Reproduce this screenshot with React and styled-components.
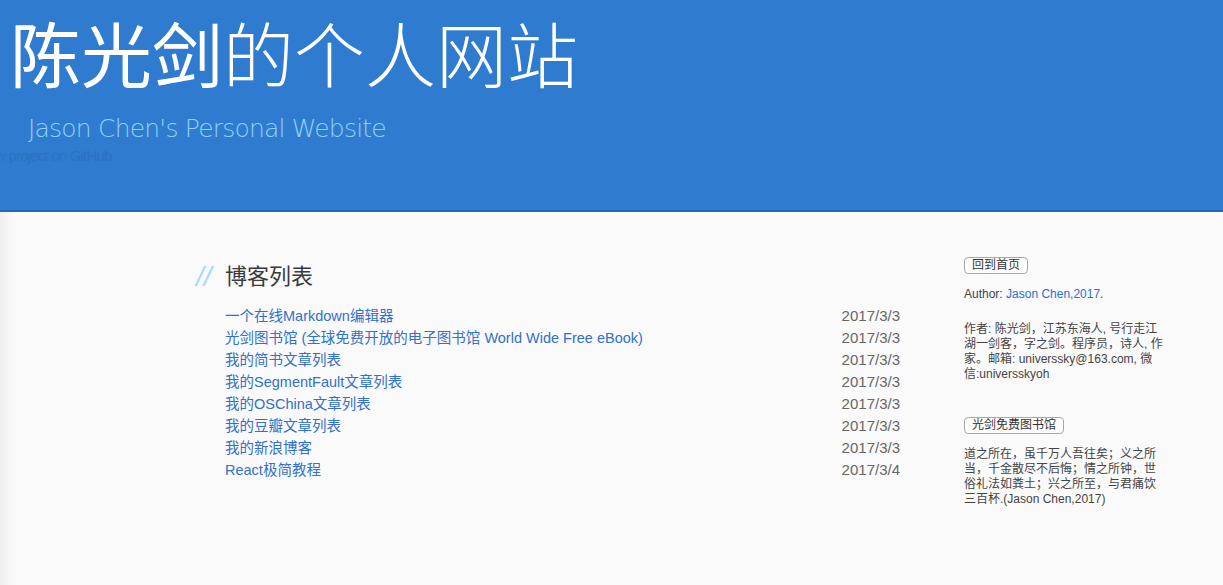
import React from "react";
import { createGlobalStyle, styled } from "styled-components";

const GlobalStyle = createGlobalStyle`
  html, body {
    margin: 0;
    padding: 0;
  }
  body {
    background: linear-gradient(to right, #efefef 0px, #f7f7f7 10px, #fafafa 16px, #fafafa 100%);
    font-family: "Liberation Sans", "Noto Sans CJK SC", sans-serif;
    color: #333;
    min-height: 585px;
  }
`;

const cjk = `"Liberation Sans", "Noto Sans CJK SC", sans-serif`;

const Header = styled.header`
  background: #2f7bcf;
  border-bottom: 2px solid #2867b4;
  height: 212px;
  box-sizing: border-box;
  overflow: hidden;
  padding-top: 8px;
`;

const SiteTitle = styled.h1`
  margin: 0 0 0 10px;
  font-family: "Noto Sans CJK SC", sans-serif;
  font-size: 71px;
  line-height: 86px;
  color: #fff;
  font-weight: 200;
`;

const Heavy = styled.span`
  font-weight: 400;
`;

const Tagline = styled.h2`
  margin: 17px 0 0 28px;
  font-family: "DejaVu Sans", sans-serif;
  font-weight: 300;
  font-size: 25px;
  letter-spacing: -0.8px;
  color: #8fd1f7;
  line-height: 36px;
`;

/* barely visible link, half off the left edge as in the original */
const GhostLink = styled.a`
  display: block;
  margin: 0 0 0 -24px;
  font-family: "Liberation Sans", sans-serif;
  font-size: 15px;
  line-height: 18px;
  color: #2c72c3;
  text-decoration: none;
  letter-spacing: -0.8px;
`;

const Page = styled.div`
  display: flex;
  align-items: flex-start;
  padding: 45px 0 40px 196px;
`;

const Main = styled.section`
  width: 704px;
  padding-top: 4px;
`;

const Heading = styled.h3`
  margin: 0;
  display: flex;
  align-items: center;
  font-family: ${cjk};
  font-weight: 400;
  font-size: 22px;
  line-height: 32px;
  color: #3a3a3a;
`;

const Slashes = styled.span`
  width: 29px;
  font-family: "Liberation Sans", sans-serif;
  font-size: 28px;
  color: #a3d9f9;
  font-style: italic;
`;

const PostList = styled.ul`
  list-style: none;
  margin: 12px 0 0;
  padding: 0 0 0 29px;
`;

const PostRow = styled.li`
  display: flex;
  justify-content: space-between;
  font-family: ${cjk};
  font-size: 14.5px;
  line-height: 22px;
`;

const PostLink = styled.a`
  color: #3270cb;
  text-decoration: none;
`;

const PostDate = styled.span`
  color: #666;
  font-size: 15px;
`;

const Sidebar = styled.aside`
  width: 200px;
  margin-left: 64px;
  font-family: ${cjk};
  font-size: 12px;
  line-height: 15px;
  color: #444;
`;

const PillButton = styled.button`
  display: block;
  font-family: ${cjk};
  font-size: 12px;
  line-height: 13px;
  color: #333;
  background: #fff;
  border: 1px solid #a9a9a9;
  border-radius: 4px;
  padding: 1px 7px;
  margin: 0;
`;

const Note = styled.p`
  margin: ${(p) => p.$mt || 0}px 0 0;
`;

const Blue = styled.a`
  color: #2f6fcb;
  text-decoration: none;
`;

const posts = [
  ["一个在线Markdown编辑器", "2017/3/3"],
  ["光剑图书馆 (全球免费开放的电子图书馆 World Wide Free eBook)", "2017/3/3"],
  ["我的简书文章列表", "2017/3/3"],
  ["我的SegmentFault文章列表", "2017/3/3"],
  ["我的OSChina文章列表", "2017/3/3"],
  ["我的豆瓣文章列表", "2017/3/3"],
  ["我的新浪博客", "2017/3/3"],
  ["React极简教程", "2017/3/4"],
];

export default function App() {
  return (
    <>
      <GlobalStyle />
      <Header>
        <SiteTitle>
          <Heavy>陈光剑</Heavy>的个人网站
        </SiteTitle>
        <Tagline>Jason Chen's Personal Website</Tagline>
        <GhostLink href="#">View project on GitHub</GhostLink>
      </Header>
      <Page>
        <Main>
          <Heading>
            <Slashes>//</Slashes>
            博客列表
          </Heading>
          <PostList>
            {posts.map(([title, date]) => (
              <PostRow key={title}>
                <PostLink href="#">{title}</PostLink>
                <PostDate>{date}</PostDate>
              </PostRow>
            ))}
          </PostList>
        </Main>
        <Sidebar>
          <PillButton>回到首页</PillButton>
          <Note $mt={13}>
            Author: <Blue href="#">Jason Chen,2017</Blue>.
          </Note>
          <Note $mt={20}>
            作者: 陈光剑，江苏东海人, 号行走江湖一剑客，字之剑。程序员，诗人, 作家。邮箱: universsky@163.com, 微信:universskyoh
          </Note>
          <Note as="div" $mt={35}>
            <PillButton>光剑免费图书馆</PillButton>
          </Note>
          <Note $mt={13}>
            道之所在，虽千万人吾往矣；义之所当，千金散尽不后悔；情之所钟，世俗礼法如粪土；兴之所至，与君痛饮三百杯.(Jason Chen,2017)
          </Note>
        </Sidebar>
      </Page>
    </>
  );
}
